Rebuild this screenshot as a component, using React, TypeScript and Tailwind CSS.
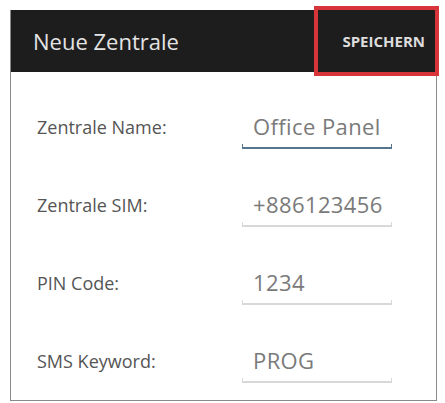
import React from 'react';

const fields = [
  { label: 'Zentrale Name:', value: 'Office Panel', focused: true },
  { label: 'Zentrale SIM:', value: '+886123456', focused: false },
  { label: 'PIN Code:', value: '1234', focused: false },
  { label: 'SMS Keyword:', value: 'PROG', focused: false },
];

function FieldRow({ label, value, focused }: { label: string; value: string; focused: boolean }) {
  return (
    <div className="flex h-[78px] items-center pl-[26px]">
      <div className="w-[205px] text-[18px] text-[#555555]">{label}</div>
      {/* Holo-style edit text: text line + bottom bar with end ticks */}
      <div className="mt-[6px] flex w-[150px] flex-col">
        <div className="h-[28px] overflow-hidden whitespace-nowrap pl-[11px] pr-[4px] text-[22px] leading-[28px] tracking-[0.4px] text-[#7a7a7a]">
          {value}
        </div>
        <div
          className={
            focused
              ? 'mt-[4px] h-[5px] border-x border-b-2 border-[#56758f]'
              : 'mt-[4px] h-[5px] border-x border-b-2 border-[#d8d8d8]'
          }
        />
      </div>
    </div>
  );
}

export default function App() {
  return (
    <div className="h-[403px] w-[445px] bg-white pt-[10px] font-['Open_Sans',sans-serif]">
      <div className="relative ml-[10px] w-[427px] border-x border-b border-[#8a8a8a]">
        {/* Action bar */}
        <div className="flex h-[62px] items-center justify-between bg-[#1e1d1e] pl-[22px] pr-[11px]">
          <span className="text-[22px] text-[#e4e4e4]">Neue Zentrale</span>
          <span className="text-[15px] font-bold text-[#dcdcdc]">SPEICHERN</span>
        </div>
        {/* Highlight box around the save action */}
        <div className="pointer-events-none absolute left-[303px] top-[-4px] h-[70px] w-[125px] border-4 border-[#d8353a]" />

        <div className="pt-[16px]">
          {fields.map((f) => (
            <FieldRow key={f.label} {...f} />
          ))}
        </div>
      </div>
    </div>
  );
}
